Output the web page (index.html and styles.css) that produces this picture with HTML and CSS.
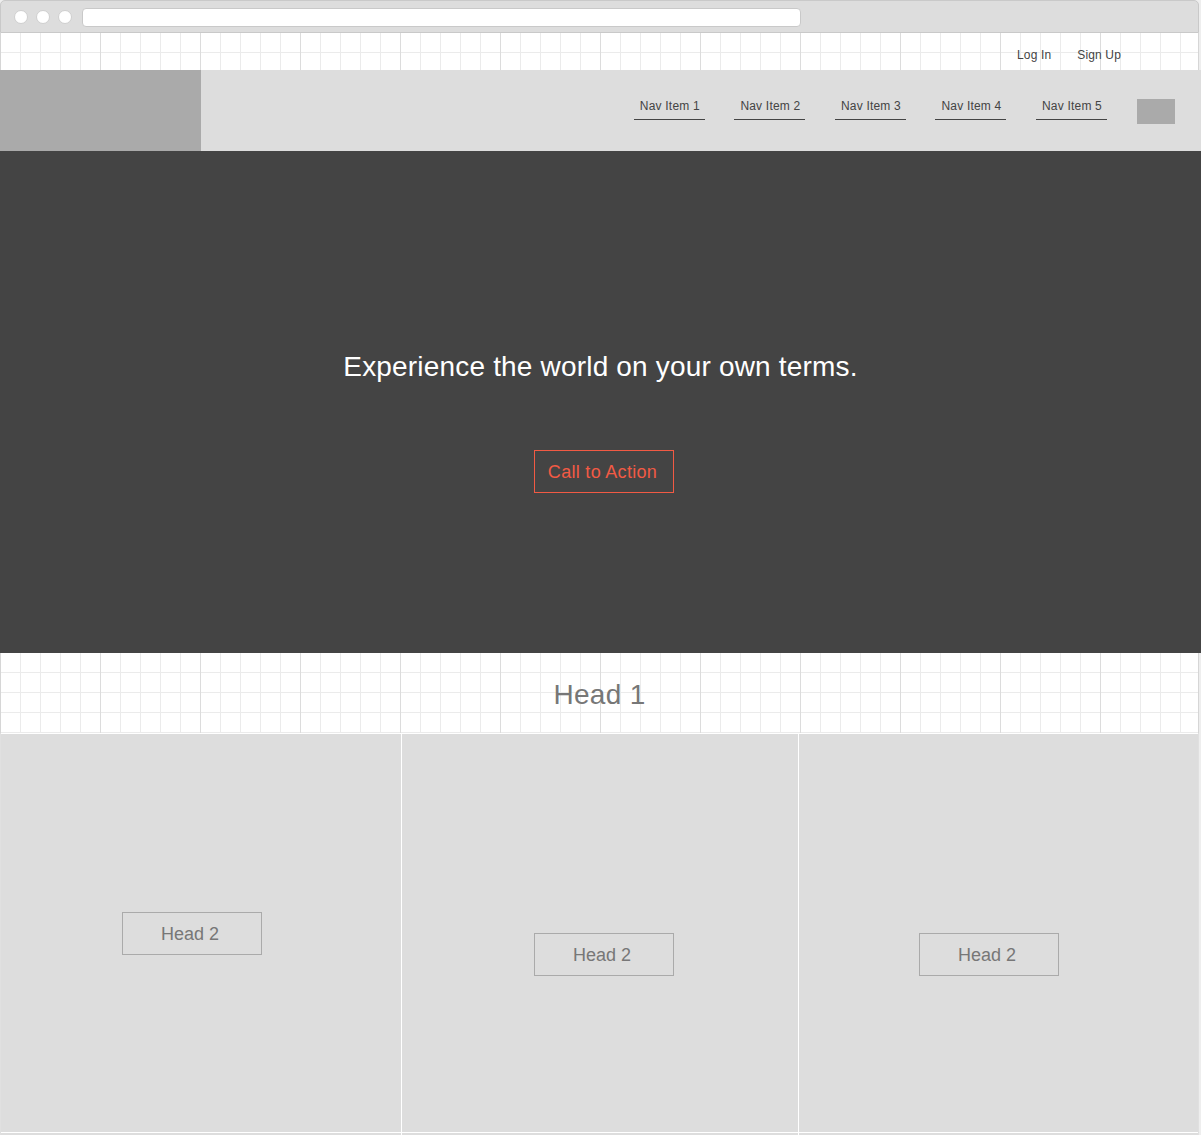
FILE: index.html
```html
<!DOCTYPE html>
<html lang="en">
<head>
<meta charset="utf-8">
<title>Wireframe</title>
<link rel="stylesheet" href="styles.css">
</head>
<body>
<div class="page">
  <div class="chrome">
    <span class="dot"></span>
    <span class="dot"></span>
    <span class="dot"></span>
    <div class="address"></div>
  </div>

  <div class="topbar grid">
    <a class="toplink" href="#">Log In</a>
    <a class="toplink" href="#">Sign Up</a>
  </div>

  <header class="header">
    <div class="logo"></div>
    <nav class="nav">
      <a class="nav-item" href="#">Nav Item 1</a>
      <a class="nav-item" href="#">Nav Item 2</a>
      <a class="nav-item" href="#">Nav Item 3</a>
      <a class="nav-item" href="#">Nav Item 4</a>
      <a class="nav-item" href="#">Nav Item 5</a>
      <span class="nav-square"></span>
    </nav>
  </header>

  <section class="hero">
    <h1 class="hero-title">Experience the world on your own terms.</h1>
    <a class="cta" href="#">Call to Action</a>
  </section>

  <section class="head1 grid">
    <h2 class="head1-title">Head 1</h2>
  </section>

  <section class="cards">
    <div class="card card-a"><div class="head2">Head 2</div></div>
    <div class="card card-b"><div class="head2">Head 2</div></div>
    <div class="card card-c"><div class="head2">Head 2</div></div>
    <div class="card"></div>
    <div class="card"></div>
    <div class="card"></div>
  </section>
</div>
</body>
</html>
```

FILE: styles.css
```css
html, body {
  margin: 0;
  padding: 0;
  overflow: hidden;
}

body {
  background: #eeeeee;
  font-family: "Liberation Sans", Arial, sans-serif;
  height: 1135px;
}

.page {
  width: 1201px;
}

a {
  text-decoration: none;
}

/* browser chrome */
.chrome {
  width: 1199px;
  height: 33px;
  box-sizing: border-box;
  border: 1px solid #c9c9c9;
  border-radius: 5px 5px 0 0;
  background: #dddddd;
  display: flex;
  align-items: center;
  padding: 1px 0 0 13px;
  gap: 8px;
}

.dot {
  width: 14px;
  height: 14px;
  box-sizing: border-box;
  border-radius: 50%;
  background: #ffffff;
  border: 1px solid #cfcfcf;
}

.address {
  width: 719px;
  height: 19px;
  box-sizing: border-box;
  margin-left: 2px;
  background: #ffffff;
  border: 1px solid #c9c9c9;
  border-radius: 4px;
}

/* grid paper */
.grid {
  background-color: #ffffff;
  background-image:
    linear-gradient(to right, transparent 99px, #dcdcdc 99px),
    linear-gradient(to bottom, transparent 99px, #dcdcdc 99px),
    linear-gradient(to right, transparent 19px, #ebebeb 19px),
    linear-gradient(to bottom, transparent 19px, #ebebeb 19px);
  background-size: 100px 100%, 100% 100px, 20px 20px, 20px 20px;
  background-origin: padding-box;
}

.topbar {
  width: 1199px;
  height: 37px;
  box-sizing: border-box;
  border-left: 1px solid #d6d6d6;
  border-right: 1px solid #d6d6d6;
  display: flex;
  justify-content: flex-end;
  align-items: flex-start;
  gap: 26px;
  padding: 15px 77px 0 0;
}

.toplink {
  font-size: 12px;
  line-height: 14px;
  letter-spacing: 0.15px;
  color: #444444;
}

/* header */
.header {
  width: 1201px;
  height: 81px;
  background: #dddddd;
  display: flex;
}

.logo {
  width: 201px;
  background: #aaaaaa;
}

.nav {
  margin-left: auto;
  display: flex;
  align-items: flex-start;
  gap: 29.5px;
  padding: 29px 26px 0 0;
}

.nav-item {
  font-size: 12px;
  line-height: 14px;
  letter-spacing: 0.2px;
  color: #444444;
  padding: 0 5px 6px 6px;
  border-bottom: 1px solid #444444;
}

.nav-square {
  width: 38px;
  height: 25px;
  margin-left: 0.5px;
  background: #aaaaaa;
}

/* hero */
.hero {
  width: 1201px;
  height: 502px;
  box-sizing: border-box;
  background: #444444;
  display: flex;
  flex-direction: column;
  align-items: center;
  padding-top: 200px;
}

.hero-title {
  margin: 0;
  font-size: 28px;
  line-height: 32px;
  font-weight: normal;
  letter-spacing: 0.18px;
  color: #ffffff;
}

.cta {
  margin: 67px 0 0 6px;
  width: 140px;
  height: 43px;
  box-sizing: border-box;
  border: 1px solid #f25a44;
  color: #f25a44;
  font-size: 18px;
  letter-spacing: 0.3px;
  padding: 2px 2px 0 0;
  display: flex;
  align-items: center;
  justify-content: center;
}

/* head 1 */
.head1 {
  width: 1199px;
  height: 80px;
  box-sizing: border-box;
  border-left: 1px solid #d6d6d6;
  border-right: 1px solid #d6d6d6;
  display: flex;
  justify-content: center;
  padding-top: 26px;
}

.head1-title {
  margin: 0;
  font-size: 28px;
  line-height: 32px;
  font-weight: normal;
  letter-spacing: 0.3px;
  color: #777777;
}

/* cards */
.cards {
  width: 1199px;
  box-sizing: border-box;
  border-left: 1px solid #e0e0e0;
  border-right: 1px solid #e0e0e0;
  background: #ffffff;
  padding-top: 1px;
  display: grid;
  grid-template-columns: 400px 396px 399px;
  grid-auto-rows: 398px;
  gap: 1px;
}

.card {
  background: #dddddd;
  box-sizing: border-box;
}

.card-a {
  padding: 178px 0 0 121px;
}

.card-b {
  padding: 199px 0 0 132px;
}

.card-c {
  padding: 199px 0 0 120px;
}

.head2 {
  width: 140px;
  height: 43px;
  box-sizing: border-box;
  border: 1px solid #aaaaaa;
  color: #777777;
  font-size: 18px;
  padding: 2px 4px 0 0;
  display: flex;
  align-items: center;
  justify-content: center;
}
```
